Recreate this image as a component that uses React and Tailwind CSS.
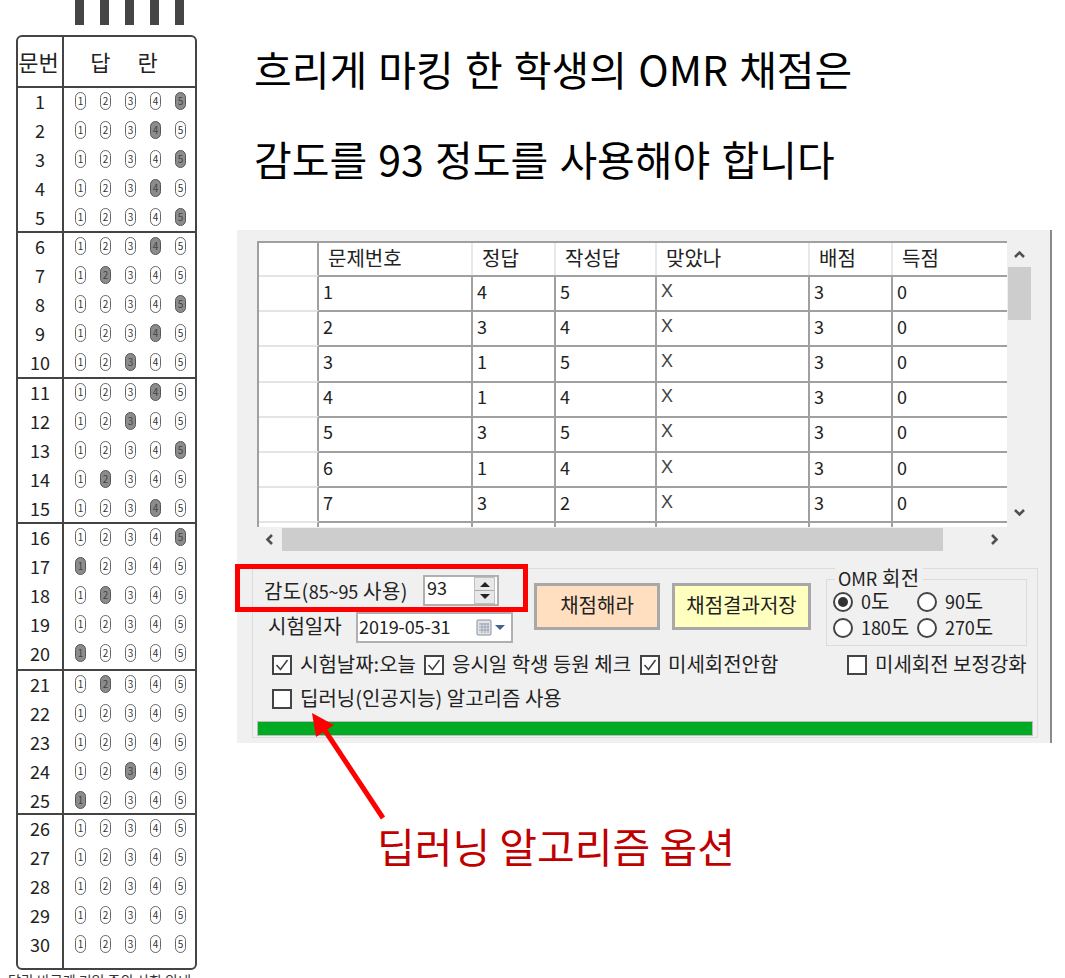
import React from 'react';

const KR = '[font-family:"Noto_Sans_CJK_KR","Noto_Sans",sans-serif]';

// marked answer per question, 0 = nothing marked
const MARKS = [5, 4, 5, 4, 5, 4, 2, 5, 4, 3, 4, 3, 5, 2, 4, 5, 1, 2, 0, 1, 2, 0, 0, 3, 1, 0, 0, 0, 0, 0];
const GROUP_HEIGHTS = ['h-[145px]', 'h-[146px]', 'h-[145px]', 'h-[147px]', 'h-[144px]', 'h-[153px]'];

const TABLE_ROWS = [
    [1, 4, 5, 'X', 3, 0],
    [2, 3, 4, 'X', 3, 0],
    [3, 1, 5, 'X', 3, 0],
    [4, 1, 4, 'X', 3, 0],
    [5, 3, 5, 'X', 3, 0],
    [6, 1, 4, 'X', 3, 0],
    [7, 3, 2, 'X', 3, 0],
    ['', '', '', '', '', ''],
];
const HEADERS = ['문제번호', '정답', '작성답', '맞았나', '배점', '득점'];
const COLS = 'grid grid-cols-[60px_154px_83px_101px_153px_83px_116px]';

// the dialog's digits are narrower than its hangul
const D = ({ children }) => <span className="text-[18px] tracking-[-0.1px]">{children}</span>;

const Bubble = ({ n, filled }) => (
    <div className={`w-[11px] h-[18px] rounded-full border flex items-center justify-center text-[10px] leading-none ${filled ? 'bg-[#8c8c8c] border-[#555] text-[#444]' : 'border-[#666] text-[#333]'}`}>
        {n}
    </div>
);

const OmrRow = ({ q }) => (
    <div className="h-[29px] flex items-center">
        <div className="w-[44px] text-center text-[18px] leading-[24px] pb-[4px] text-[#222]">{q}</div>
        <div className="w-[2px] h-full bg-[#444]" />
        <div className="flex gap-[14px] pl-[11px] pb-[3px]">
            {[1, 2, 3, 4, 5].map(n => <Bubble key={n} n={n} filled={MARKS[q - 1] === n} />)}
        </div>
    </div>
);

const OmrSheet = () => (
    <div className="w-[237px] shrink-0 pl-[16px]">
        <div className="flex gap-[16px] pl-[59px] h-[25px]">
            {[0, 1, 2, 3, 4].map(i => <div key={i} className="w-[9px] h-full bg-[#454545]" />)}
        </div>
        <div className="mt-[10px] w-[181px] border-2 border-[#444] rounded-md">
            <div className="h-[51px] flex items-center border-b-2 border-[#444] text-[22px] text-[#222]">
                <div className="w-[44px] pr-[3px] text-center whitespace-nowrap">문번</div>
                <div className="w-[2px] h-full bg-[#444]" />
                <div className="flex-1 flex justify-center gap-[27px] pr-[11px]"><span>답</span><span>란</span></div>
            </div>
            {GROUP_HEIGHTS.map((h, g) => (
                <div key={g} className={`${h} flex ${g < 5 ? 'border-b-2 border-[#444]' : ''}`}>
                    <div className="flex-1">
                        {[1, 2, 3, 4, 5].map(i => <OmrRow key={i} q={g * 5 + i} />)}
                        {g === 5 && <div className="h-[8px] ml-[44px] w-[2px] bg-[#444]" />}
                    </div>
                </div>
            ))}
        </div>
        <div className="mt-[1px] -ml-[8px] text-[14px] leading-[18px] whitespace-nowrap text-[#333]">답란 바르게 기입   주의 사항 안내</div>
    </div>
);

const GridTable = () => (
    <div className="w-[750px] h-[286px] overflow-hidden bg-white border-t-2 border-l-2 border-[#a0a0a0] text-[#222]">
        <div className={`${COLS} h-[32px]`}>
            <div className="border-r-2 border-[#a0a0a0]" />
            {HEADERS.map((h, i) => (
                <div key={h} className={`flex items-center pl-[9px] pb-[4px] ${i < 5 ? 'border-r-2 border-[#e8e8e8]' : ''}`}>{h}</div>
            ))}
        </div>
        {TABLE_ROWS.map((row, r) => (
            <div key={r} className={`${COLS} h-[35.2px]`}>
                <div className="border-t-2 border-[#e4e4e4] border-r-2 border-r-[#a0a0a0]" />
                {row.map((c, i) => (
                    <div key={i} className={`flex items-center pl-[4px] pb-[5px] border-t-2 border-[#a0a0a0] ${i < 5 ? 'border-r-2' : ''}`}>
                        <span className={c === 'X' ? 'text-[18px] text-[#444] [font-family:"Liberation_Sans",sans-serif]' : 'text-[18px]'}>{c}</span>
                    </div>
                ))}
            </div>
        ))}
    </div>
);

const Chevron = ({ d }) => (
    <svg width="13" height="13" viewBox="0 0 13 13" fill="none" stroke="#505050" strokeWidth="2.6"><path d={d} /></svg>
);

const Check = ({ checked, label, className }) => (
    <div className={`flex items-center gap-[8px] ${className}`}>
        <div className="w-[20px] h-[20px] bg-white border-2 border-[#444] flex items-center justify-center">
            {checked && <svg width="16" height="16" viewBox="0 0 16 16" fill="none" stroke="#444" strokeWidth="1.6"><path d="M2.5 8l4 4.5L13.5 3" /></svg>}
        </div>
        <span className="whitespace-nowrap pb-[3px]">{label}</span>
    </div>
);

const Radio = ({ checked, label, className }) => (
    <div className={`flex items-center gap-[8px] ${className}`}>
        <div className="w-[20px] h-[20px] rounded-full bg-white border-2 border-[#444] flex items-center justify-center">
            {checked && <div className="w-[10px] h-[10px] rounded-full bg-[#333]" />}
        </div>
        <span className="whitespace-nowrap leading-[20px] pb-[3px]">{label}</span>
    </div>
);

const Panel = () => (
    <div className="relative w-[815px] h-[513px] bg-[#f0f0f0] border-r-2 border-[#8a8a8a] pt-[11px] pl-[15px] text-[20px] text-[#222]">
        <div className="flex ml-[5px]">
            <GridTable />
            <div className="w-[24px] h-[286px] flex flex-col items-center">
                <div className="h-[26px] flex items-center"><Chevron d="M2 9l4.5-4.5L11 9" /></div>
                <div className="w-[23px] h-[53px] bg-[#cdcdcd]" />
                <div className="flex-1" />
                <div className="h-[26px] flex items-center mb-[2px]"><Chevron d="M2 4l4.5 4.5L11 4" /></div>
            </div>
        </div>
        <div className="flex items-center ml-[5px] mt-[1px] w-[750px] h-[23px]">
            <div className="w-[25px] flex justify-center"><Chevron d="M9 2L4.5 6.5 9 11" /></div>
            <div className="w-[661px] h-full bg-[#cdcdcd]" />
            <div className="flex-1 flex justify-end pr-[6px]"><Chevron d="M4 2l4.5 4.5L4 11" /></div>
        </div>

        <div className="mt-[17px] w-[786px] h-[170px] border border-[#dcdcdc] pt-[6px] pl-[11px]">
            <div className="flex h-[69px]">
                <div className="w-[250px]">
                    <div className="flex items-center h-[31px]">
                        <span className="w-[159px] whitespace-nowrap tracking-[0.4px]">감도(<D>85~95</D> 사용)</span>
                        <div className="w-[76px] h-full bg-white border-2 border-[#b0b0b0] flex justify-between pl-[2px] pr-[2px]">
                            <span className="leading-[20px]"><D>93</D></span>
                            <div className="w-[21px] flex flex-col items-center justify-center gap-[3px] bg-[#e8e8e8] border border-[#c0c0c0]">
                                <div className="w-0 h-0 border-x-[5px] border-x-transparent border-b-[5px] border-b-[#222]" />
                                <div className="w-full h-px bg-[#aaa]" />
                                <div className="w-0 h-0 border-x-[5px] border-x-transparent border-t-[5px] border-t-[#222]" />
                            </div>
                        </div>
                    </div>
                    <div className="flex items-center h-[31px] mt-[6px] pl-[4px]">
                        <span className="w-[88px] whitespace-nowrap pb-[3px]">시험일자</span>
                        <div className="w-[157px] h-full bg-white border-2 border-[#b0b0b0] flex items-center justify-between pl-[1px] pr-[6px]">
                            <span className="pb-[3px] leading-[24px]"><D>2019-05-31</D></span>
                            <div className="flex items-center gap-[2px]">
                                <svg width="17" height="17" viewBox="0 0 17 17">
                                    <rect x="1" y="1" width="14" height="15" rx="1" fill="#dfe3ea" stroke="#8a8f99" />
                                    <path d="M3 5h10M3 8h10M3 11h10M6 4v10M9 4v10M12 4v10" stroke="#9aa0ad" strokeWidth="1" />
                                </svg>
                                <div className="w-0 h-0 border-x-[5px] border-x-transparent border-t-[5px] border-t-[#44608f]" />
                            </div>
                        </div>
                    </div>
                </div>
                <div className="flex mt-[8px] ml-[20px] h-[47px] gap-[12px]">
                    <div className="w-[126px] h-full bg-[#ffdfc0] border-[3px] border-[#a8a8a8] flex items-center justify-center pb-[3px]">채점해라</div>
                    <div className="w-[139px] h-full bg-[#ffffc0] border-[3px] border-[#a8a8a8] flex items-center justify-center pb-[3px]">채점결과저장</div>
                </div>
                <div className="relative ml-[15px] mt-[4px] w-[201px] h-[67px] border border-[#dcdcdc] pt-[9px] pl-[6px]">
                    <span className="absolute -top-[12px] left-[8px] px-[3px] bg-[#f0f0f0] leading-[20px] tracking-[0.4px] whitespace-nowrap"><D>OMR</D> 회전</span>
                    <div className="flex h-[26px]">
                        <Radio checked label={<><D>0</D>도</>} className="w-[84px]" />
                        <Radio label={<><D>90</D>도</>} />
                    </div>
                    <div className="flex h-[26px]">
                        <Radio label={<><D>180</D>도</>} className="w-[84px]" />
                        <Radio label={<><D>270</D>도</>} />
                    </div>
                </div>
            </div>
            <div className="flex h-[24px] mt-[9px] pl-[8px]">
                <Check checked label="시험날짜:오늘" className="w-[152px]" />
                <Check checked label="응시일 학생 등원 체크" className="w-[216px]" />
                <Check checked label="미세회전안함" className="w-[207px]" />
                <Check label="미세회전 보정강화" />
            </div>
            <div className="flex h-[24px] mt-[10px] pl-[8px]">
                <Check label="딥러닝(인공지능) 알고리즘 사용" />
            </div>
            <div className="mt-[10px] -ml-[7px] w-[776px] h-[15px] bg-[#00aa22] border border-[#bcbcbc]" />
        </div>
    </div>
);

export default function App() {
    return (
        <div className={`relative flex w-[1065px] h-[978px] overflow-hidden bg-white text-black ${KR}`}>
            <OmrSheet />
            <div className="flex-1">
                <div className="mt-[23px] ml-[17px] text-[41px] leading-[90px] [word-spacing:2px] whitespace-nowrap">
                    <div>흐리게 마킹 한 학생의 OMR 채점은</div>
                    <div>감도를 93 정도를 사용해야 합니다</div>
                </div>
                <div className="mt-[27px]">
                    <Panel />
                </div>
                <div className="mt-[77px] ml-[140px] text-[41px] leading-[50px] text-[#c00000] whitespace-nowrap">딥러닝 알고리즘 옵션</div>
            </div>
            {/* red callouts over the screenshot */}
            <div className="absolute left-[235px] top-[564px] w-[293px] h-[48px] border-[5px] border-[#ff0000]" />
            <svg className="absolute left-[300px] top-[700px]" width="100" height="125" viewBox="0 0 100 125" fill="none">
                <path d="M83 118L22 26" stroke="#ff0000" strokeWidth="5" />
                <path d="M12 13L34 25 16 37z" fill="#ff0000" />
            </svg>
        </div>
    );
}
